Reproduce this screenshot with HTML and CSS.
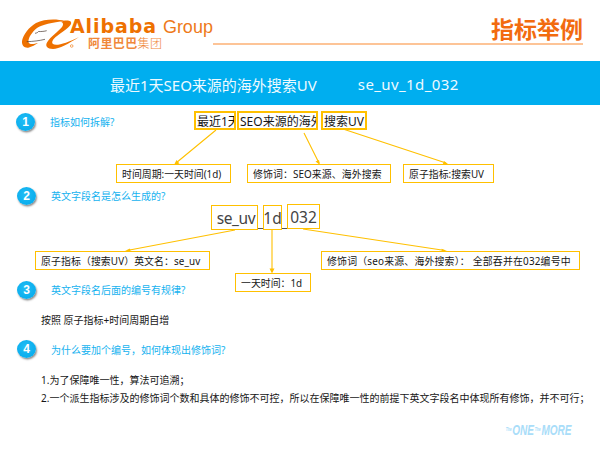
FILE: index.html
```html
<!DOCTYPE html>
<html lang="zh-CN">
<head>
<meta charset="utf-8">
<title>指标举例</title>
<link rel="stylesheet" href="styles.css">
</head>
<body>
<header class="top">
  <div class="logo">
    <svg class="swoosh" viewBox="0 0 60 32" aria-hidden="true">
      <path class="sw-o" d="M43 2C34-.5 22 0 14 4 7 8 1 16 0 22c-.5 5 3 7.500 7 6.500 3-1 6-2.500 9-4.500-4 1-9 2-9.500-1C6 19 10 13 15 9c5-3.500 15-5.500 28-7Z"/>
      <path class="sw-o" d="M43 1.500c4-.5 7 .5 6 3.500-2 4-9 8-14 12-4 3-6 6-4 8 3 2.500 14-1 26-7-10 6.500-20 12-26 12s-8-3-6-6.500c3-5.500 12-11.500 15-15.500 2-3 1-5-2-5Z"/>
      <path class="sw-d" d="M13 14.300c2-.3 3-1 3.500-1.800 3 .2 6-.2 8.200-.8M4.700 22.700c6-.2 13-1 18.300-2.400"/>
      <circle class="sw-r" cx="49.700" cy="27" r="1.300"/>
    </svg>
    <div class="brand">
      <div class="brand-top"><span class="alibaba">Alibaba</span><span class="group">Group</span></div>
      <div class="brand-cn">阿里巴巴<span class="brand-cn-light">集团</span></div>
    </div>
  </div>
  <div class="title-wrap">
    <h1 class="page-title">指标举例</h1>
    <div class="rule"></div>
  </div>
</header>

<div class="banner">
  <span class="banner-name">最近1天SEO来源的海外搜索UV</span>
  <span class="banner-code">se_uv_1d_032</span>
</div>

<main>
  <section class="sec sec-1">
    <div class="head head-1"><span class="num">1</span><span class="q">指标如何拆解?</span></div>
    <svg class="links links-1" viewBox="0 105 600 82" aria-hidden="true">
      <path class="link" d="M216 130 176 163M304 133 319 163M343 129 446 163"/>
      <path class="tip" d="M174 165l2.500-5 3 3.500ZM320 165l-4.500-3.500 3.500-1.500ZM448 164l-5.500 1 1.500-4Z"/>
    </svg>
    <div class="node part p1"><span>最近1天</span></div>
    <div class="node part p2"><span>SEO来源的海外</span></div>
    <div class="node part p3"><span>搜索UV</span></div>
    <div class="node box b1">时间周期:一天时间(1d)</div>
    <div class="node box b2">修饰词：SEO来源、海外搜索</div>
    <div class="node box b3">原子指标:搜索UV</div>
  </section>

  <section class="sec sec-2">
    <div class="head"><span class="num">2</span><span class="q">英文字段名是怎么生成的?</span></div>
    <svg class="links links-2" viewBox="0 187 600 94" aria-hidden="true">
      <path class="under" d="M258 228.500H263M282 228.500H287"/>
      <path class="link" d="M235 230 127 250.500M272 230V272M303 229 445 250.500"/>
      <path class="tip" d="M125 251l5-2.500.8 4ZM272 273.500l-2.500-5h5ZM447 251l-5 1.800-.5-4Z"/>
    </svg>
    <div class="node code c1">se_uv</div>
    <div class="node code c2">1d</div>
    <div class="node code c3">032</div>
    <div class="node box b4">原子指标（搜索UV）英文名：se_uv</div>
    <div class="node box b5">一天时间：1d</div>
    <div class="node box b6">修饰词（seo来源、海外搜索）： 全部吞并在032编号中</div>
  </section>

  <section class="sec sec-3">
    <div class="head"><span class="num">3</span><span class="q">英文字段名后面的编号有规律?</span></div>
    <p class="note note-3">按照 原子指标+时间周期自增</p>
  </section>

  <section class="sec-4">
    <div class="head head-4"><span class="num">4</span><span class="q">为什么要加个编号，如何体现出修饰词?</span></div>
    <p class="note note-4a">1.为了保障唯一性，算法可追溯；</p>
    <p class="note note-4b">2.一个派生指标涉及的修饰词个数和具体的修饰不可控，所以在保障唯一性的前提下英文字段名中体现所有修饰，并不可行；</p>
    <div class="more"><span class="more-sm">The</span>ONE<span class="more-sm">The</span>MORE</div>
  </section>
</main>
</body>
</html>
```

FILE: styles.css
```css
* { box-sizing: border-box; }
html, body { margin: 0; padding: 0; }
body {
  width: 600px;
  height: 450px;
  overflow: hidden;
  background: #fff;
  color: #161616;
  font-family: "Noto Sans", "Noto Sans CJK SC", sans-serif;
}

/* header */
.top {
  height: 61px;
  display: flex;
  padding: 19px 17px 0 22px;
  justify-content: space-between;
}
.logo { display: flex; align-items: flex-start; width: 200px; }
.swoosh { width: 60px; height: 32px; flex: none; margin-right: -12px; overflow: visible; }
.sw-o { fill: #ee7100; }
.sw-d { fill: none; stroke: #4a3a30; stroke-width: .7; }
.sw-r { fill: none; stroke: #ee7100; stroke-width: .6; }
.brand { display: flex; flex-direction: column; }
.brand-top { display: flex; align-items: baseline; height: 17px; line-height: 15px; }
.alibaba {
  font: 700 19px/15px "DejaVu Sans", sans-serif;
  letter-spacing: .9px;
  color: #ee7100;
}
.group {
  font: 400 18px/15px "Liberation Sans", sans-serif;
  color: #ee7a1a;
  margin-left: 6px;
}
.brand-cn {
  margin: 1px 0 0 18px;
  font: 700 12px/11px "Noto Sans CJK SC", sans-serif;
  letter-spacing: .4px;
  color: #f0883a;
  white-space: nowrap;
}
.brand-cn-light { font-weight: 300; }
.title-wrap {
  display: flex;
  flex-direction: column;
  align-items: flex-end;
  width: 412px;
  margin-top: -5px;
}
.page-title {
  margin: 0;
  font: 700 23px/28px "Noto Sans CJK SC", sans-serif;
  color: #f26b0f;
  height: 29px;
}
.rule { width: 100%; height: 2px; background: #fdc497; }

/* banner */
.banner {
  height: 44px;
  background: #00aeef;
  color: #eefaff;
  display: flex;
  align-items: center;
  padding: 2px 0 0 110px;
  font-size: 15px;
  gap: 41px;
}
.banner-code { letter-spacing: .4px; }

/* sections */
.sec { position: relative; }
.sec-1 { height: 82px; padding-top: 8px; }
.sec-2 { height: 94px; }
.sec-3 { height: 57px; }
.head { display: flex; align-items: center; padding-left: 17px; gap: 15px; }
.head-1 { padding-left: 16px; }
.head-4 .q { margin-top: 3px; }
.num {
  width: 19px;
  height: 18px;
  flex: none;
  border-radius: 50%;
  background: radial-gradient(circle at 45% 40%, #22bdf5, #00a7ea);
  box-shadow: 1px 1.500px 2px rgba(0, 0, 0, .45);
  color: #fff;
  font: 700 12px/18px "Liberation Sans", sans-serif;
  text-align: center;
}
.q { font-size: 10px; line-height: 18px; color: #16b2ef; white-space: nowrap; }

/* diagram */
.links { position: absolute; left: 0; top: 0; width: 600px; display: block; }
.links-1 { height: 82px; }
.links-2 { height: 94px; }
.link { fill: none; stroke: #ffc000; stroke-width: 1.100px; }
.under { fill: none; stroke: #555; stroke-width: 1px; }
.tip { fill: #ffc000; }
.node { position: absolute; background: #fff; white-space: nowrap; display: flex; align-items: center; overflow: hidden; }
.part { top: 6px; height: 19px; border: 2px solid #ffc000; font-size: 12px; padding-left: 1px; }
.p1 { left: 194px; width: 42px; }
.p2 { left: 237px; width: 81px; }
.p3 { left: 321px; width: 46px; }
.box { border: 1px solid #ffc000; font-size: 9.900px; height: 19px; padding-left: 5px; }
.b1 { left: 116px; top: 59px; width: 115px; }
.b2 { left: 247px; top: 59px; width: 144px; letter-spacing: .1px; }
.b3 { left: 403px; top: 59px; width: 91px; }
.b4 { left: 35px; top: 64px; width: 175px; letter-spacing: .1px; }
.b5 { left: 235px; top: 86px; width: 76px; }
.b6 { left: 321px; top: 64px; width: 259px; letter-spacing: .2px; }
.code { border: 1px solid #ffc000; font-size: 15.500px; color: #444; height: 25px; justify-content: center; }
.c1 { left: 211px; top: 18px; width: 47px; letter-spacing: -.4px; padding-left: 3px; }
.c2 { left: 263px; top: 18px; width: 19px; }
.c3 { left: 287px; top: 17px; width: 33px; }

/* notes */
.note { margin: 0; font-size: 10px; line-height: 14px; padding-left: 41px; white-space: nowrap; }
.note-3 { margin-top: 14px; }
.note-4a { margin-top: 14px; }
.note-4b { margin-top: 4px; }
.more {
  margin: 17px 0 0 505px;
  width: 102px;
  font: italic 700 15px/14px "Liberation Sans", sans-serif;
  color: #a9ddf9;
  white-space: nowrap;
  transform: scaleX(.67);
  transform-origin: left center;
}
.more-sm { font-size: 5px; vertical-align: 4px; margin: 0 1px; }
```
